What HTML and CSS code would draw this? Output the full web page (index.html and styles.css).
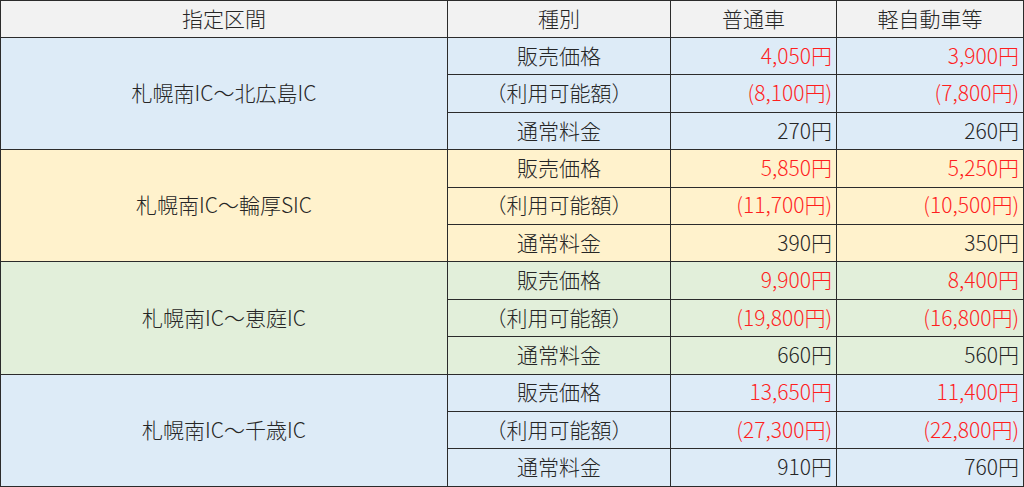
FILE: index.html
```html
<!DOCTYPE html>
<html lang="ja">
<head>
<meta charset="utf-8">
<title>料金表</title>
<link rel="stylesheet" href="styles.css">
</head>
<body>
<table class="fare">
  <colgroup>
    <col class="c-sec">
    <col class="c-kind">
    <col class="c-car">
    <col class="c-kei">
  </colgroup>
  <thead>
    <tr class="head">
      <th>指定区間</th>
      <th>種別</th>
      <th>普通車</th>
      <th>軽自動車等</th>
    </tr>
  </thead>
  <tbody class="g-blue">
    <tr><td class="sec" rowspan="3">札幌南IC～北広島IC</td><td class="kind">販売価格</td><td class="num red">4,050円</td><td class="num red">3,900円</td></tr>
    <tr><td class="kind">（利用可能額）</td><td class="num red">(8,100円)</td><td class="num red">(7,800円)</td></tr>
    <tr><td class="kind">通常料金</td><td class="num">270円</td><td class="num">260円</td></tr>
  </tbody>
  <tbody class="g-yellow">
    <tr><td class="sec" rowspan="3">札幌南IC～輪厚SIC</td><td class="kind">販売価格</td><td class="num red">5,850円</td><td class="num red">5,250円</td></tr>
    <tr><td class="kind">（利用可能額）</td><td class="num red">(11,700円)</td><td class="num red">(10,500円)</td></tr>
    <tr><td class="kind">通常料金</td><td class="num">390円</td><td class="num">350円</td></tr>
  </tbody>
  <tbody class="g-green">
    <tr><td class="sec" rowspan="3">札幌南IC～恵庭IC</td><td class="kind">販売価格</td><td class="num red">9,900円</td><td class="num red">8,400円</td></tr>
    <tr><td class="kind">（利用可能額）</td><td class="num red">(19,800円)</td><td class="num red">(16,800円)</td></tr>
    <tr><td class="kind">通常料金</td><td class="num">660円</td><td class="num">560円</td></tr>
  </tbody>
  <tbody class="g-blue">
    <tr><td class="sec" rowspan="3">札幌南IC～千歳IC</td><td class="kind">販売価格</td><td class="num red">13,650円</td><td class="num red">11,400円</td></tr>
    <tr><td class="kind">（利用可能額）</td><td class="num red">(27,300円)</td><td class="num red">(22,800円)</td></tr>
    <tr><td class="kind">通常料金</td><td class="num">910円</td><td class="num">760円</td></tr>
  </tbody>
</table>
</body>
</html>
```

FILE: styles.css
```css
html, body {
  margin: 0;
  padding: 0;
  background: #ffffff;
}

.fare {
  table-layout: fixed;
  width: 1024px;
  border-collapse: separate;
  border-spacing: 0;
  border-top: 1px solid #2b2b2b;
  border-left: 1px solid #2b2b2b;
  font-family: "Noto Sans CJK JP", "Noto Sans", sans-serif;
  font-size: 21px;
  font-weight: 300;
  color: #262626;
}

.c-sec { width: 447px; }
.c-kind { width: 223px; }
.c-car { width: 166px; }
.c-kei { width: 187px; }

.fare th,
.fare td {
  box-sizing: border-box;
  border-right: 1px solid #2b2b2b;
  border-bottom: 1px solid #2b2b2b;
  padding: 0 4px 2px;
  font-weight: 300;
  line-height: 1;
  white-space: nowrap;
  vertical-align: middle;
  overflow: hidden;
}

.head th {
  background: #f2f2f2;
  text-align: center;
  height: 37px;
}

.fare tbody tr {
  height: 37.42px;
}

.fare td {
  height: 37.42px;
}

.sec,
.kind {
  text-align: center;
}

.num {
  text-align: right;
}

.red {
  color: #ff1f1f;
}

.g-blue td { background: #ddebf7; }
.g-yellow td { background: #fff2cc; }
.g-green td { background: #e2efda; }
```
